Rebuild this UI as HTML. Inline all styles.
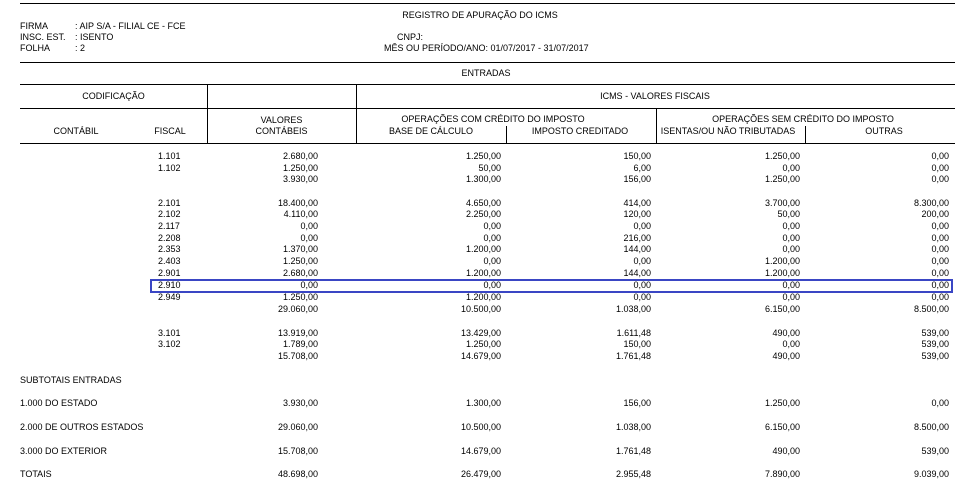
<!DOCTYPE html>
<html><head><meta charset="utf-8"><style>
body{margin:0;background:#fff;width:970px;height:501px;position:relative;overflow:hidden;font-family:"Liberation Sans",Arial,sans-serif;font-size:9px;color:#000;}
.t{position:absolute;white-space:nowrap;line-height:10px;}
.h{position:absolute;height:1px;background:#000;left:20px;width:935px;}
.v{position:absolute;width:1px;background:#000;}
.r{position:absolute;left:0;width:970px;height:10px;line-height:10px;}
.r span{position:absolute;white-space:nowrap;}
.a{left:158px}.b{right:652px}.c{right:469px}.d{right:319px}.e{right:170px}.f{right:21px}
.c1{position:absolute;text-align:center;white-space:nowrap;line-height:10px;}
</style></head><body>
<div class="h" style="top:3px"></div>
<div class="h" style="top:62px"></div>
<div class="h" style="top:84px"></div>
<div class="h" style="top:108px;"></div>
<div class="h" style="top:143px"></div>
<div style="position:absolute;background:#fff;left:21px;width:186px;top:108px;height:0"></div>
<div class="v" style="left:207px;top:84px;height:59px"></div>
<div class="v" style="left:356px;top:84px;height:59px"></div>
<div class="v" style="left:656px;top:108px;height:35px"></div>
<div class="v" style="left:506px;top:126px;height:17px"></div>
<div class="v" style="left:805px;top:126px;height:17px"></div>

<div class="c1" style="left:280px;width:400px;top:10px">REGISTRO DE APURAÇÃO DO ICMS</div>
<div class="t" style="left:20px;top:21px">FIRMA</div><div class="t" style="left:75px;top:21px">: AIP S/A - FILIAL CE - FCE</div>
<div class="t" style="left:20px;top:32px">INSC. EST.</div><div class="t" style="left:75px;top:32px">: ISENTO</div>
<div class="t" style="left:20px;top:43px">FOLHA</div><div class="t" style="left:75px;top:43px">: 2</div>
<div class="t" style="left:397px;top:32px">CNPJ:</div>
<div class="t" style="left:384px;top:43px">MÊS OU PERÍODO/ANO: 01/07/2017 - 31/07/2017</div>
<div class="c1" style="left:386px;width:200px;top:68px">ENTRADAS</div>
<div class="c1" style="left:20px;width:187px;top:91px">CODIFICAÇÃO</div>
<div class="c1" style="left:555px;width:200px;top:91px">ICMS - VALORES FISCAIS</div>
<div class="c1" style="left:207px;width:149px;top:115px">VALORES</div>
<div class="c1" style="left:207px;width:149px;top:126px">CONTÁBEIS</div>
<div class="c1" style="left:26px;width:100px;top:126px">CONTÁBIL</div>
<div class="c1" style="left:120px;width:100px;top:126px">FISCAL</div>
<div class="c1" style="left:393px;width:200px;top:114px">OPERAÇÕES COM CRÉDITO DO IMPOSTO</div>
<div class="t" style="left:389px;top:126px">BASE DE CÁLCULO</div>
<div class="c1" style="left:480px;width:200px;top:126px">IMPOSTO CREDITADO</div>
<div class="c1" style="left:703px;width:200px;top:114px">OPERAÇÕES SEM CRÉDITO DO IMPOSTO</div>
<div class="c1" style="left:628px;width:200px;top:126px">ISENTAS/OU NÃO TRIBUTADAS</div>
<div class="c1" style="left:784px;width:200px;top:126px">OUTRAS</div>

<div class="r" style="top:151px"><span class="a">1.101</span><span class="b">2.680,00</span><span class="c">1.250,00</span><span class="d">150,00</span><span class="e">1.250,00</span><span class="f">0,00</span></div>
<div class="r" style="top:163px"><span class="a">1.102</span><span class="b">1.250,00</span><span class="c">50,00</span><span class="d">6,00</span><span class="e">0,00</span><span class="f">0,00</span></div>
<div class="r" style="top:174px"><span class="b">3.930,00</span><span class="c">1.300,00</span><span class="d">156,00</span><span class="e">1.250,00</span><span class="f">0,00</span></div>

<div class="r" style="top:198px"><span class="a">2.101</span><span class="b">18.400,00</span><span class="c">4.650,00</span><span class="d">414,00</span><span class="e">3.700,00</span><span class="f">8.300,00</span></div>
<div class="r" style="top:209px"><span class="a">2.102</span><span class="b">4.110,00</span><span class="c">2.250,00</span><span class="d">120,00</span><span class="e">50,00</span><span class="f">200,00</span></div>
<div class="r" style="top:221px"><span class="a">2.117</span><span class="b">0,00</span><span class="c">0,00</span><span class="d">0,00</span><span class="e">0,00</span><span class="f">0,00</span></div>
<div class="r" style="top:233px"><span class="a">2.208</span><span class="b">0,00</span><span class="c">0,00</span><span class="d">216,00</span><span class="e">0,00</span><span class="f">0,00</span></div>
<div class="r" style="top:244px"><span class="a">2.353</span><span class="b">1.370,00</span><span class="c">1.200,00</span><span class="d">144,00</span><span class="e">0,00</span><span class="f">0,00</span></div>
<div class="r" style="top:256px"><span class="a">2.403</span><span class="b">1.250,00</span><span class="c">0,00</span><span class="d">0,00</span><span class="e">1.200,00</span><span class="f">0,00</span></div>
<div class="r" style="top:268px"><span class="a">2.901</span><span class="b">2.680,00</span><span class="c">1.200,00</span><span class="d">144,00</span><span class="e">1.200,00</span><span class="f">0,00</span></div>
<div class="r" style="top:280px"><span class="a">2.910</span><span class="b">0,00</span><span class="c">0,00</span><span class="d">0,00</span><span class="e">0,00</span><span class="f">0,00</span></div>
<div class="r" style="top:292px"><span class="a">2.949</span><span class="b">1.250,00</span><span class="c">1.200,00</span><span class="d">0,00</span><span class="e">0,00</span><span class="f">0,00</span></div>
<div class="r" style="top:304px"><span class="b">29.060,00</span><span class="c">10.500,00</span><span class="d">1.038,00</span><span class="e">6.150,00</span><span class="f">8.500,00</span></div>
<div style="position:absolute;left:150px;top:279px;width:799px;height:10px;border:2px solid #3a46c4;"></div>

<div class="r" style="top:328px"><span class="a">3.101</span><span class="b">13.919,00</span><span class="c">13.429,00</span><span class="d">1.611,48</span><span class="e">490,00</span><span class="f">539,00</span></div>
<div class="r" style="top:339px"><span class="a">3.102</span><span class="b">1.789,00</span><span class="c">1.250,00</span><span class="d">150,00</span><span class="e">0,00</span><span class="f">539,00</span></div>
<div class="r" style="top:351px"><span class="b">15.708,00</span><span class="c">14.679,00</span><span class="d">1.761,48</span><span class="e">490,00</span><span class="f">539,00</span></div>

<div class="t" style="left:20px;top:375px">SUBTOTAIS ENTRADAS</div>
<div class="r" style="top:398px"><span style="left:20px">1.000 DO ESTADO</span><span class="b">3.930,00</span><span class="c">1.300,00</span><span class="d">156,00</span><span class="e">1.250,00</span><span class="f">0,00</span></div>
<div class="r" style="top:422px"><span style="left:20px">2.000 DE OUTROS ESTADOS</span><span class="b">29.060,00</span><span class="c">10.500,00</span><span class="d">1.038,00</span><span class="e">6.150,00</span><span class="f">8.500,00</span></div>
<div class="r" style="top:446px"><span style="left:20px">3.000 DO EXTERIOR</span><span class="b">15.708,00</span><span class="c">14.679,00</span><span class="d">1.761,48</span><span class="e">490,00</span><span class="f">539,00</span></div>
<div class="r" style="top:469px"><span style="left:20px">TOTAIS</span><span class="b">48.698,00</span><span class="c">26.479,00</span><span class="d">2.955,48</span><span class="e">7.890,00</span><span class="f">9.039,00</span></div>
</body></html>
